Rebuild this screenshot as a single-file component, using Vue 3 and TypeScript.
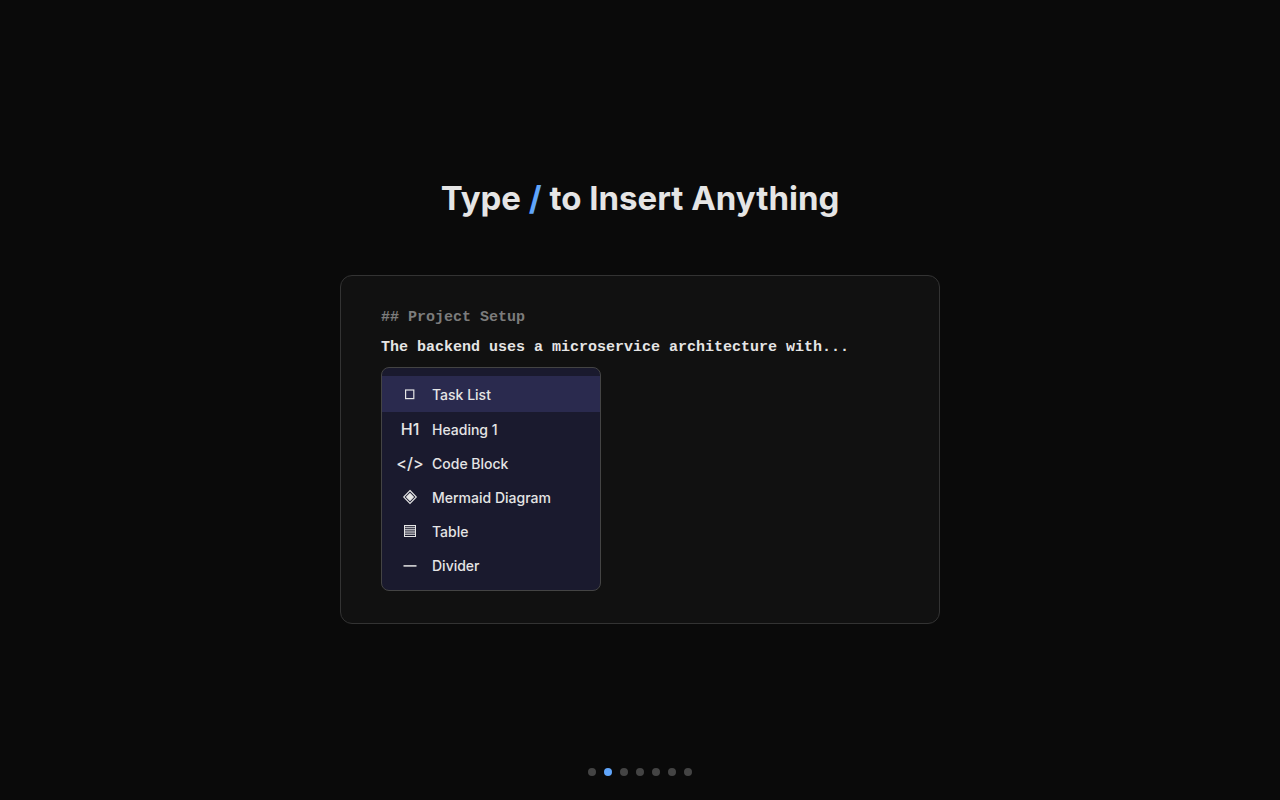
<script setup lang="ts">
import { ref } from 'vue'

interface Command {
  id: string
  label: string
  text?: string
}

const commands: Command[] = [
  { id: 'task', label: 'Task List' },
  { id: 'heading', label: 'Heading 1', text: 'H1' },
  { id: 'code', label: 'Code Block', text: '</>' },
  { id: 'mermaid', label: 'Mermaid Diagram' },
  { id: 'table', label: 'Table' },
  { id: 'divider', label: 'Divider' },
]

const selected = ref('task')
const slide = ref(2)
const slideCount = 7
</script>

<template>
  <div class="page">
    <main class="stage">
      <h1 class="title">Type <span class="slash">/</span> to Insert Anything</h1>
      <section class="editor">
        <div class="lines">
          <p class="line muted">## Project Setup</p>
          <p class="line">The backend uses a microservice architecture with...</p>
        </div>
        <div class="menu">
          <button
            v-for="command in commands"
            :key="command.id"
            type="button"
            class="item"
            :class="{ selected: command.id === selected }"
            @click="selected = command.id"
          >
            <span class="icon" aria-hidden="true">
              <template v-if="command.text">{{ command.text }}</template>
              <svg v-else width="16" height="16" viewBox="0 0 16 16" fill="none" stroke="currentColor">
                <rect v-if="command.id === 'task'" x="3.6" y="4" width="8.2" height="8.6" stroke-width="1.2" />
                <template v-else-if="command.id === 'mermaid'">
                  <path d="M8 1.5 14.3 8 8 14.5 1.7 8Z" stroke-width="1.1" />
                  <path d="M8 3.7 12.2 8 8 12.3 3.8 8Z" fill="currentColor" stroke="none" />
                </template>
                <template v-else-if="command.id === 'table'">
                  <rect x="2.5" y="2.5" width="11" height="11" stroke-width="1" />
                  <path d="M3 4.5h10M3 6.7h10M3 9h10M3 11.3h10" stroke-width="1.5" opacity="0.75" />
                </template>
                <path v-else d="M1.5 8.9h13" stroke-width="1.5" />
              </svg>
            </span>
            <span class="label">{{ command.label }}</span>
          </button>
        </div>
      </section>
    </main>
    <nav class="dots" aria-label="Slides">
      <button
        v-for="n in slideCount"
        :key="n"
        type="button"
        class="dot"
        :class="{ active: n === slide }"
        :aria-label="`Slide ${n}`"
        @click="slide = n"
      ></button>
    </nav>
  </div>
</template>

<style>
body {
  margin: 0;
  background: #0a0a0a;
}
</style>

<style scoped>
.page {
  box-sizing: border-box;
  min-height: 100vh;
  display: grid;
  grid-template-rows: 1fr auto 1fr;
  background: #0a0a0a;
  color: #e5e5e5;
  font-family: Inter, "Liberation Sans", sans-serif;
}

.stage {
  grid-row: 2;
  display: flex;
  flex-direction: column;
  align-items: center;
  gap: 54px;
}

.title {
  margin: 0;
  font-size: 33px;
  line-height: 45px;
  font-weight: 700;
  text-align: center;
}

.slash {
  color: #60a5fa;
}

.editor {
  box-sizing: border-box;
  width: 100%;
  max-width: 600px;
  padding: 32px 40px;
  border: 1px solid #333;
  border-radius: 12px;
  background: #111;
}

.lines {
  display: flex;
  flex-direction: column;
  gap: 10px;
  margin-bottom: 9px;
}

.line {
  margin: 0;
  font-family: "Courier New", "Liberation Mono", monospace;
  font-size: 15px;
  line-height: 20px;
  font-weight: 700;
}

.line.muted {
  color: #7c7c7c;
}

.menu {
  box-sizing: border-box;
  width: 220px;
  padding: 8px 0;
  display: flex;
  flex-direction: column;
  border: 1px solid #444;
  border-radius: 8px;
  background: #1a1a2e;
}

.item {
  display: flex;
  align-items: center;
  gap: 10px;
  height: 34px;
  padding: 2px 16px 0;
  border: 0;
  background: transparent;
  color: #e5e5e5;
  font-family: inherit;
  font-size: 14px;
  font-weight: 500;
  text-align: left;
  cursor: pointer;
}

.item.selected {
  height: 36px;
  background: #2a2a4e;
}

.icon {
  display: flex;
  justify-content: center;
  align-items: center;
  flex: none;
  width: 24px;
  padding-bottom: 2px;
  font-size: 16px;
  line-height: 20px;
}

.label {
  white-space: nowrap;
  line-height: 18px;
}

.dots {
  grid-row: 3;
  align-self: end;
  display: flex;
  justify-content: center;
  gap: 8px;
  padding-bottom: 24px;
}

.dot {
  width: 8px;
  height: 8px;
  padding: 0;
  border: 0;
  border-radius: 50%;
  background: #444;
  cursor: pointer;
}

.dot.active {
  background: #60a5fa;
}
</style>
